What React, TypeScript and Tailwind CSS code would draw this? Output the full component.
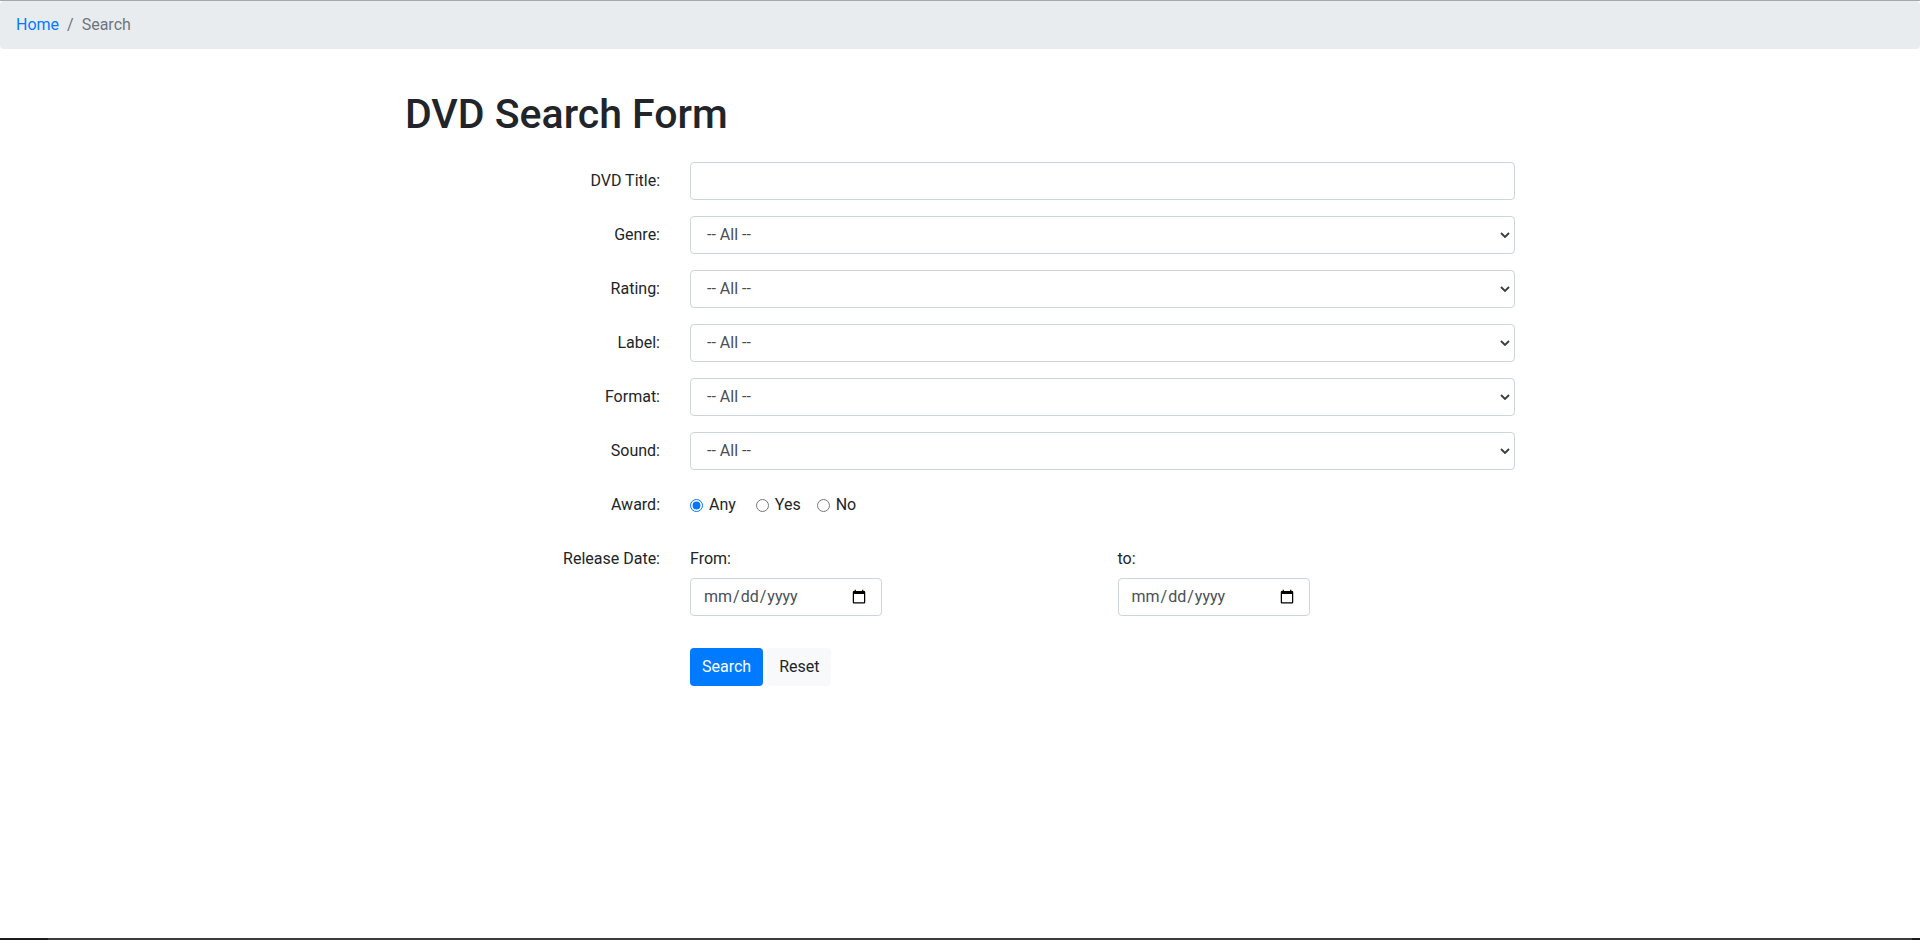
import React from "react";

const Chevron = () => (
  <svg
    className="pointer-events-none absolute right-[5px] top-1/2 -translate-y-1/2"
    width="10"
    height="6"
    viewBox="0 0 10 6"
  >
    <path d="M1 1 L5 5 L9 1" fill="none" stroke="#3b3b3b" strokeWidth="1.8" />
  </svg>
);

function Row({ label, children }: { label: string; children: React.ReactNode }) {
  return (
    <div className="flex mb-4">
      <label className="w-[285px] shrink-0 pr-[15px] text-right pt-[7px] pb-[7px] leading-6">
        {label}
      </label>
      <div className="flex-1 px-[15px]">{children}</div>
    </div>
  );
}

function Select() {
  return (
    <div className="relative">
      <select className="appearance-none w-full h-[38px] border border-[#ced4da] rounded bg-white pl-4 pr-8 text-base leading-6 text-[#495057] outline-none">
        <option>-- All --</option>
      </select>
      <Chevron />
    </div>
  );
}

export default function App() {
  return (
    <div className="min-h-[940px] flex flex-col bg-white font-['Roboto',sans-serif] text-base text-[#212529]">
      <div className="h-px bg-[#a8a8a8]" />
      <nav className="bg-[#e9ecef] rounded px-4 py-3 leading-6 mb-4 flex">
        <span className="text-[#007bff]">Home</span>
        <span className="text-[#6c757d] px-2">/</span>
        <span className="text-[#6c757d]">Search</span>
      </nav>
      <div className="w-[1140px] mx-auto">
        <h1 className="px-[15px] pt-[25px] text-[41px] font-medium leading-[1.2] mb-[23px]">DVD Search Form</h1>
        <form>
          <Row label="DVD Title:">
            <input
              type="text"
              className="w-full h-[38px] border border-[#ced4da] rounded bg-white px-3 text-[#495057] outline-none"
            />
          </Row>
          <Row label="Genre:">
            <Select />
          </Row>
          <Row label="Rating:">
            <Select />
          </Row>
          <Row label="Label:">
            <Select />
          </Row>
          <Row label="Format:">
            <Select />
          </Row>
          <Row label="Sound:">
            <Select />
          </Row>
          <Row label="Award:">
            <div className="flex items-center h-[38px]">
              <label className="inline-flex items-center mr-[20px]">
                <input type="radio" name="award" defaultChecked className="m-0 mr-[6px] w-[13px] h-[13px]" />
                Any
              </label>
              <label className="inline-flex items-center mr-[16px]">
                <input type="radio" name="award" className="m-0 mr-[6px] w-[13px] h-[13px]" />
                Yes
              </label>
              <label className="inline-flex items-center">
                <input type="radio" name="award" className="m-0 mr-[6px] w-[13px] h-[13px]" />
                No
              </label>
            </div>
          </Row>
          <div className="flex mb-4">
            <label className="w-[285px] shrink-0 pr-[15px] text-right pt-[7px] pb-[7px] leading-6">
              Release Date:
            </label>
            <div className="flex-1 flex">
              <div className="w-1/2 px-[15px]">
                <div className="pt-[7px] pb-[7px] leading-6">From:</div>
                <input
                  type="date"
                  className="w-[192px] h-[38px] border border-[#ced4da] rounded bg-white px-3 text-[#495057] outline-none"
                />
              </div>
              <div className="w-1/2 px-[15px]">
                <div className="pt-[7px] pb-[7px] leading-6">to:</div>
                <input
                  type="date"
                  className="w-[192px] h-[38px] border border-[#ced4da] rounded bg-white px-3 text-[#495057] outline-none"
                />
              </div>
            </div>
          </div>
          <div className="flex pt-4">
            <div className="w-[285px] shrink-0" />
            <div className="flex-1 px-[15px] flex gap-1">
              <button type="button" className="h-[38px] px-3 rounded bg-[#007bff] text-white leading-6">
                Search
              </button>
              <button type="button" className="h-[38px] px-3 rounded bg-[#f8f9fa] text-[#212529] leading-6">
                Reset
              </button>
            </div>
          </div>
        </form>
      </div>
      <div className="mt-auto h-[2px] flex">
        <div className="w-[48px] bg-[#1c1c1c]" />
        <div className="flex-1 bg-[#3c3c3c]" />
        <div className="w-[8px] bg-[#1c1c1c]" />
      </div>
    </div>
  );
}
